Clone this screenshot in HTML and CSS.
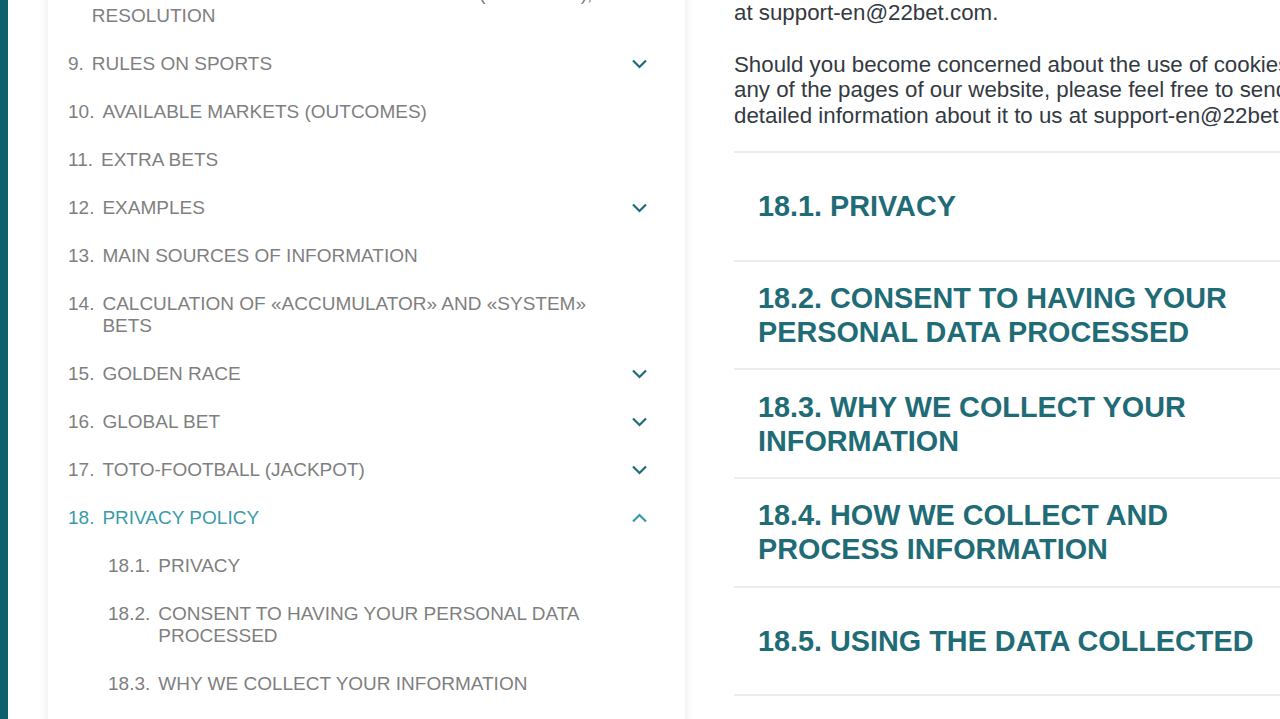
FILE: index.html
```html
<!DOCTYPE html>
<html lang="en">
<head>
    <meta charset="UTF-8">
    <meta name="viewport" content="width=device-width, initial-scale=1.0">
    <title>Rules - Privacy policy</title>
    <link rel="stylesheet" href="styles.css">
</head>
<body>
    <div class="rail"></div>
    <div class="page">
        <aside class="sidebar">
            <ul class="menu">
                <li class="item"><span class="num">8.</span><span class="label">PROCEDURE FOR CONSIDERING CLAIMS (DISPUTES), RESOLUTION</span></li>
                <li class="item"><span class="num">9.</span><span class="label">RULES ON SPORTS</span><svg class="chev" viewBox="0 0 16 10"><path d="M1.5 1.5 L8 8 L14.5 1.5"/></svg></li>
                <li class="item"><span class="num">10.</span><span class="label">AVAILABLE MARKETS (OUTCOMES)</span></li>
                <li class="item"><span class="num">11.</span><span class="label">EXTRA BETS</span></li>
                <li class="item"><span class="num">12.</span><span class="label">EXAMPLES</span><svg class="chev" viewBox="0 0 16 10"><path d="M1.5 1.5 L8 8 L14.5 1.5"/></svg></li>
                <li class="item"><span class="num">13.</span><span class="label">MAIN SOURCES OF INFORMATION</span></li>
                <li class="item"><span class="num">14.</span><span class="label">CALCULATION OF «ACCUMULATOR» AND «SYSTEM» BETS</span></li>
                <li class="item"><span class="num">15.</span><span class="label">GOLDEN RACE</span><svg class="chev" viewBox="0 0 16 10"><path d="M1.5 1.5 L8 8 L14.5 1.5"/></svg></li>
                <li class="item"><span class="num">16.</span><span class="label">GLOBAL BET</span><svg class="chev" viewBox="0 0 16 10"><path d="M1.5 1.5 L8 8 L14.5 1.5"/></svg></li>
                <li class="item"><span class="num">17.</span><span class="label">TOTO-FOOTBALL (JACKPOT)</span><svg class="chev" viewBox="0 0 16 10"><path d="M1.5 1.5 L8 8 L14.5 1.5"/></svg></li>
                <li class="item active"><span class="num">18.</span><span class="label">PRIVACY POLICY</span><svg class="chev" viewBox="0 0 16 10"><path d="M1.5 8.5 L8 2 L14.5 8.5"/></svg></li>
                <li class="item sub"><span class="num">18.1.</span><span class="label">PRIVACY</span></li>
                <li class="item sub"><span class="num">18.2.</span><span class="label">CONSENT TO HAVING YOUR PERSONAL DATA PROCESSED</span></li>
                <li class="item sub"><span class="num">18.3.</span><span class="label">WHY WE COLLECT YOUR INFORMATION</span></li>
                <li class="item sub"><span class="num">18.4.</span><span class="label">HOW WE COLLECT AND PROCESS INFORMATION</span></li>
            </ul>
        </aside>
        <main class="content">
            <p class="text">at support-en@22bet.com.</p>
            <p class="text">Should you become concerned about the use of cookies on any of the pages of our website, please feel free to send detailed information about it to us at support-en@22bet.com.</p>
            <section class="block"><h2>18.1. PRIVACY</h2></section>
            <section class="block"><h2>18.2. CONSENT TO HAVING YOUR PERSONAL DATA PROCESSED</h2></section>
            <section class="block"><h2>18.3. WHY WE COLLECT YOUR INFORMATION</h2></section>
            <section class="block"><h2>18.4. HOW WE COLLECT AND PROCESS INFORMATION</h2></section>
            <section class="block"><h2>18.5. USING THE DATA COLLECTED</h2></section>
            <section class="block"><h2>18.6. DATA PROTECTION</h2></section>
        </main>
    </div>
</body>
</html>
```

FILE: styles.css
```css
* {
    box-sizing: border-box;
}
html, body {
    height: 719px;
    overflow: hidden;
}
body {
    margin: 0;
    padding: 0;
    display: flex;
    font-family: "Liberation Sans", Arial, sans-serif;
    background-color: #fff;
}
.rail {
    width: 8px;
    flex: none;
    background-color: #0e616a;
}
.page {
    display: flex;
    align-items: flex-start;
    padding-left: 40px;
}
.sidebar {
    width: 637px;
    flex: none;
    min-height: 800px;
    margin-top: -30px;
    background-color: #fff;
    box-shadow: 0 0 10px rgba(0, 0, 0, 0.09);
}
.menu {
    list-style: none;
    margin: 0;
    padding: 0;
}
.item {
    display: flex;
    align-items: center;
    padding: 13px 37px 13px 20px;
    font-size: 19px;
    line-height: 22px;
    color: #7f7f7f;
}
.item .num {
    flex: none;
    align-self: flex-start;
    margin-right: 8px;
}
.item .label {
    flex: 1;
    margin-right: 38px; /* room for the chevron */
}
.item.sub {
    padding-left: 60px;
}
.item.active {
    color: #3a9ba8;
}
.chev {
    flex: none;
    width: 17px;
    height: 10px;
    margin-left: -17px;
    fill: none;
    stroke: #1e6c76;
    stroke-width: 2.2;
}
.active .chev {
    stroke: #3a9ba8;
}
.content {
    flex: none;
    width: 612px;
    margin-left: 49px;
    color: #333a42;
}
.text {
    margin: 0 0 26px;
    font-size: 22.3px;
    line-height: 25.5px;
}
.text + .text {
    margin-bottom: 23px;
}
.block {
    display: flex;
    align-items: center;
    min-height: 108.7px;
    padding: 19px 24px;
    border-top: 2px solid #ececec;
}
.block h2 {
    margin: 0;
    max-width: 530px;
    font-size: 28.8px;
    line-height: 34px;
    color: #1f6c77;
}
```
